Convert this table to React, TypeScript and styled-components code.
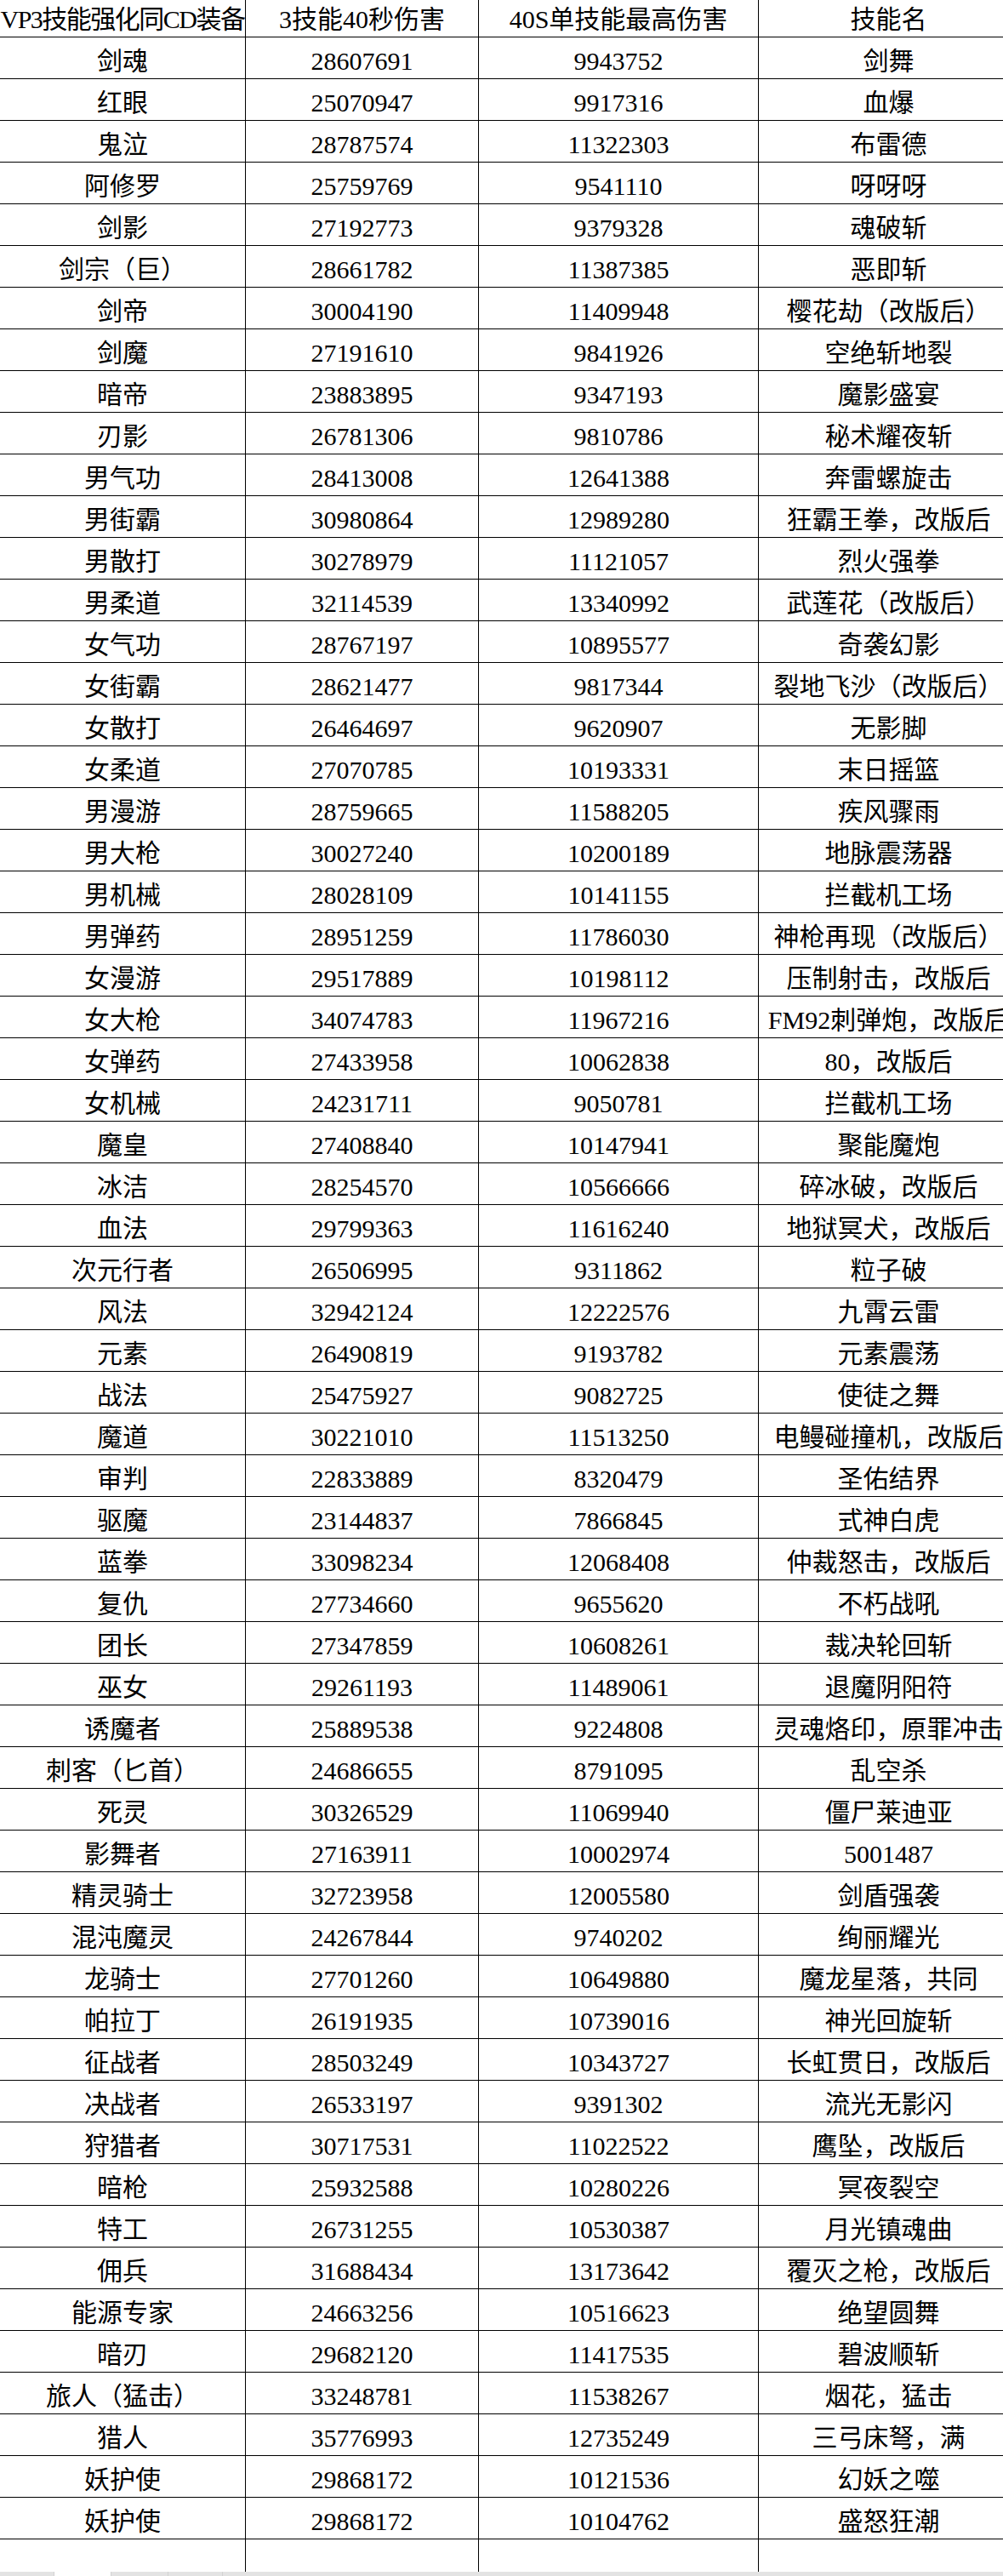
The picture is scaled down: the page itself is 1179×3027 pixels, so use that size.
import React, { FC } from 'react';
import styled, { createGlobalStyle } from 'styled-components';

const GlobalStyle = createGlobalStyle`
  html, body {
    margin: 0;
    padding: 0;
    background: #ffffff;
  }
  body {
    overflow-x: hidden;
  }
`;

const Page = styled.div`
  width: 1179px;
  height: 3027px;
  overflow: hidden;
  display: flex;
  flex-direction: column;
  font-family: "Liberation Serif", "Noto Sans CJK SC", serif;
  font-size: 30px;
  color: #000;
`;

const Sheet = styled.div`
  width: 1197px;
  flex: 1;
  display: flex;
  flex-direction: column;
`;

const Row = styled.div<{ $height: number; $last?: boolean }>`
  display: grid;
  grid-template-columns: 289px 274px 329px 305px;
  height: ${(p) => p.$height}px;
  border-bottom: ${(p) => (p.$last ? 'none' : '1px solid #000')};
  flex: ${(p) => (p.$last ? 1 : 'none')};
`;

const Cell = styled.div<{ $pad: number; $tight?: boolean }>`
  display: flex;
  justify-content: center;
  align-items: flex-start;
  padding-top: ${(p) => p.$pad}px;
  line-height: 36px;
  white-space: nowrap;
  overflow: hidden;
  border-right: 1px solid #000;
  letter-spacing: ${(p) => (p.$tight ? '-1.5px' : 'normal')};

  &:last-child {
    border-right: none;
  }
`;

const TabStrip = styled.div`
  height: 5px;
  display: flex;
  background: #e3e3e3;
`;

const Tab = styled.div<{ $width: number; $active?: boolean }>`
  width: ${(p) => p.$width}px;
  background: ${(p) => (p.$active ? '#ffffff' : '#e3e3e3')};
  border-right: 1px solid #d2d2d2;
`;

const TabRest = styled.div`
  flex: 1;
`;

type Entry = [string, string, string, string];

const header: Entry = ['VP3技能强化同CD装备', '3技能40秒伤害', '40S单技能最高伤害', '技能名'];

const rows: Entry[] = [
  ['剑魂', '28607691', '9943752', '剑舞'],
  ['红眼', '25070947', '9917316', '血爆'],
  ['鬼泣', '28787574', '11322303', '布雷德'],
  ['阿修罗', '25759769', '9541110', '呀呀呀'],
  ['剑影', '27192773', '9379328', '魂破斩'],
  ['剑宗（巨）', '28661782', '11387385', '恶即斩'],
  ['剑帝', '30004190', '11409948', '樱花劫（改版后）'],
  ['剑魔', '27191610', '9841926', '空绝斩地裂'],
  ['暗帝', '23883895', '9347193', '魔影盛宴'],
  ['刃影', '26781306', '9810786', '秘术耀夜斩'],
  ['男气功', '28413008', '12641388', '奔雷螺旋击'],
  ['男街霸', '30980864', '12989280', '狂霸王拳，改版后'],
  ['男散打', '30278979', '11121057', '烈火强拳'],
  ['男柔道', '32114539', '13340992', '武莲花（改版后）'],
  ['女气功', '28767197', '10895577', '奇袭幻影'],
  ['女街霸', '28621477', '9817344', '裂地飞沙（改版后）'],
  ['女散打', '26464697', '9620907', '无影脚'],
  ['女柔道', '27070785', '10193331', '末日摇篮'],
  ['男漫游', '28759665', '11588205', '疾风骤雨'],
  ['男大枪', '30027240', '10200189', '地脉震荡器'],
  ['男机械', '28028109', '10141155', '拦截机工场'],
  ['男弹药', '28951259', '11786030', '神枪再现（改版后）'],
  ['女漫游', '29517889', '10198112', '压制射击，改版后'],
  ['女大枪', '34074783', '11967216', 'FM92刺弹炮，改版后'],
  ['女弹药', '27433958', '10062838', '80，改版后'],
  ['女机械', '24231711', '9050781', '拦截机工场'],
  ['魔皇', '27408840', '10147941', '聚能魔炮'],
  ['冰洁', '28254570', '10566666', '碎冰破，改版后'],
  ['血法', '29799363', '11616240', '地狱冥犬，改版后'],
  ['次元行者', '26506995', '9311862', '粒子破'],
  ['风法', '32942124', '12222576', '九霄云雷'],
  ['元素', '26490819', '9193782', '元素震荡'],
  ['战法', '25475927', '9082725', '使徒之舞'],
  ['魔道', '30221010', '11513250', '电鳗碰撞机，改版后'],
  ['审判', '22833889', '8320479', '圣佑结界'],
  ['驱魔', '23144837', '7866845', '式神白虎'],
  ['蓝拳', '33098234', '12068408', '仲裁怒击，改版后'],
  ['复仇', '27734660', '9655620', '不朽战吼'],
  ['团长', '27347859', '10608261', '裁决轮回斩'],
  ['巫女', '29261193', '11489061', '退魔阴阳符'],
  ['诱魔者', '25889538', '9224808', '灵魂烙印，原罪冲击'],
  ['刺客（匕首）', '24686655', '8791095', '乱空杀'],
  ['死灵', '30326529', '11069940', '僵尸莱迪亚'],
  ['影舞者', '27163911', '10002974', '5001487'],
  ['精灵骑士', '32723958', '12005580', '剑盾强袭'],
  ['混沌魔灵', '24267844', '9740202', '绚丽耀光'],
  ['龙骑士', '27701260', '10649880', '魔龙星落，共同'],
  ['帕拉丁', '26191935', '10739016', '神光回旋斩'],
  ['征战者', '28503249', '10343727', '长虹贯日，改版后'],
  ['决战者', '26533197', '9391302', '流光无影闪'],
  ['狩猎者', '30717531', '11022522', '鹰坠，改版后'],
  ['暗枪', '25932588', '10280226', '冥夜裂空'],
  ['特工', '26731255', '10530387', '月光镇魂曲'],
  ['佣兵', '31688434', '13173642', '覆灭之枪，改版后'],
  ['能源专家', '24663256', '10516623', '绝望圆舞'],
  ['暗刃', '29682120', '11417535', '碧波顺斩'],
  ['旅人（猛击）', '33248781', '11538267', '烟花，猛击'],
  ['猎人', '35776993', '12735249', '三弓床弩，满'],
  ['妖护使', '29868172', '10121536', '幻妖之噬'],
  ['妖护使', '29868172', '10104762', '盛怒狂潮'],
];

const App: FC = () => {
  return (
    <Page>
      <GlobalStyle />
      <Sheet>
        <Row $height={43}>
          {header.map((text, i) => (
            <Cell key={i} $pad={5} $tight={i === 0}>
              {text}
            </Cell>
          ))}
        </Row>
        {rows.map((row, r) => (
          <Row key={r} $height={48}>
            {row.map((text, i) => (
              <Cell key={i} $pad={10}>
                {text}
              </Cell>
            ))}
          </Row>
        ))}
        <Row $height={38} $last>
          <Cell $pad={10} />
          <Cell $pad={10} />
          <Cell $pad={10} />
          <Cell $pad={10} />
        </Row>
      </Sheet>
      <TabStrip>
        <Tab $width={63} />
        <Tab $width={66} $active />
        <Tab $width={66} />
        <Tab $width={63} />
        <TabRest />
      </TabStrip>
    </Page>
  );
};

export default App;
